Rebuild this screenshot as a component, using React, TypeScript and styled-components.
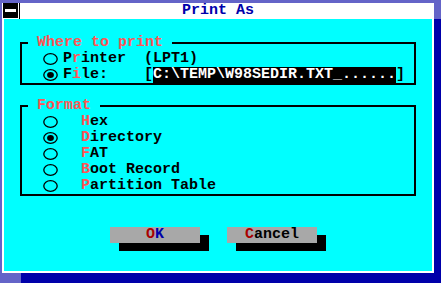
import React from "react";
import styled, { createGlobalStyle } from "styled-components";

const Global = createGlobalStyle`
  html, body { margin: 0; padding: 0; background: #6464c8; }
  #root { width: 441px; height: 283px; }
`;

const Screen = styled.div`
  width: 441px;
  height: 283px;
  overflow: hidden;
  box-sizing: border-box;
  padding: 3px 0 0 2px;
  background: #6464c8;
  font-family: "Liberation Mono", "DejaVu Sans Mono", monospace;
  font-weight: 700;
  font-size: 15px;
  line-height: 16px;
`;

const Window = styled.div`
  width: 432px;
  height: 270px;
  background: #ffffff;
  box-shadow: 19px 16px 0 #0000aa;
  display: flex;
  flex-direction: column;
`;

const TitleBar = styled.div`
  height: 16px;
  display: grid;
  grid-template-columns: 1fr auto 1fr;
  align-items: start;
`;

const SysArea = styled.div`
  display: flex;
  height: 16px;
  padding-left: 1px;
`;

const SysBox = styled.div`
  width: 15px;
  height: 15px;
  background: #000;
  display: flex;
  align-items: center;
  justify-content: center;
`;

const SysDash = styled.div`
  width: 11px;
  height: 3px;
  background: #fff;
`;

const SysDivider = styled.div`
  width: 1px;
  height: 16px;
  margin-left: 1px;
  background: #000;
`;

const Title = styled.div`
  color: #0000aa;
  white-space: pre;
`;

const Body = styled.div`
  flex: 1;
  margin: 0 2px 2px;
  background: #00ffff;
  padding: 0 16px;
  display: flex;
  flex-direction: column;
`;

const Group = styled.fieldset<{ $top: number }>`
  margin: ${(p) => p.$top}px 0 0;
  padding: 0 0 0 6px;
  border: 2px solid #000;
  min-width: 0;
`;

const Legend = styled.legend`
  padding: 0 9px;
  height: 16px;
  color: #ff5555;
  white-space: pre;
`;

const Row = styled.div`
  display: flex;
  align-items: center;
  height: 16px;
  padding-left: 15px;
  white-space: pre;
  color: #000;
`;

const Label = styled.span<{ $gap: number }>`
  margin-left: ${(p) => p.$gap}px;
  display: inline-flex;
  align-items: center;
  height: 16px;
`;

const Hot = styled.span`
  color: #ff5555;
`;

const Input = styled.span`
  display: inline-block;
  height: 16px;
  background: #000;
  color: #fff;
`;

const ButtonRow = styled.div`
  display: flex;
  gap: 27px;
  margin-top: 31px;
  padding-left: 90px;
`;

const Button = styled.div`
  width: 90px;
  height: 16px;
  background: #a8a8a8;
  box-shadow: 9px 8px 0 #000;
  text-align: center;
  color: #000;
  white-space: pre;
`;

const BtnHot = styled.span`
  color: #aa0000;
`;

const BtnBlue = styled.span`
  color: #0000aa;
`;

const Radio: React.FC<{ checked?: boolean }> = ({ checked }) => (
  <svg width="15" height="12" viewBox="0 0 15 12">
    <ellipse cx="7.5" cy="6" rx="6.7" ry="5.3" fill="none" stroke="#000" strokeWidth="1.3" />
    {checked && <ellipse cx="7.5" cy="6" rx="3.4" ry="2.9" fill="#000" />}
  </svg>
);

const formats: { hot: string; rest: string; checked?: boolean }[] = [
  { hot: "H", rest: "ex" },
  { hot: "D", rest: "irectory", checked: true },
  { hot: "F", rest: "AT" },
  { hot: "B", rest: "oot Record" },
  { hot: "P", rest: "artition Table" },
];

export default function App() {
  return (
    <>
      <Global />
      <Screen>
        <Window>
          <TitleBar>
            <SysArea>
              <SysBox>
                <SysDash />
              </SysBox>
              <SysDivider />
            </SysArea>
            <Title>Print As</Title>
            <div />
          </TitleBar>
          <Body>
            <Group $top={16}>
              <Legend>Where to print</Legend>
              <Row>
                <Radio />
                <Label $gap={5}>
                  P<Hot>r</Hot>inter  (LPT1)
                </Label>
              </Row>
              <Row>
                <Radio checked />
                <Label $gap={5}>
                  F<Hot>i</Hot>le:    [<Input>C:\TEMP\W98SEDIR.TXT_......</Input>]
                </Label>
              </Row>
            </Group>
            <Group $top={13}>
              <Legend>Format</Legend>
              {formats.map((f) => (
                <Row key={f.hot}>
                  <Radio checked={f.checked} />
                  <Label $gap={23}>
                    <Hot>{f.hot}</Hot>
                    {f.rest}
                  </Label>
                </Row>
              ))}
            </Group>
            <ButtonRow>
              <Button>
                <BtnHot>O</BtnHot>
                <BtnBlue>K</BtnBlue>
              </Button>
              <Button>
                <BtnHot>C</BtnHot>ancel
              </Button>
            </ButtonRow>
          </Body>
        </Window>
      </Screen>
    </>
  );
}
